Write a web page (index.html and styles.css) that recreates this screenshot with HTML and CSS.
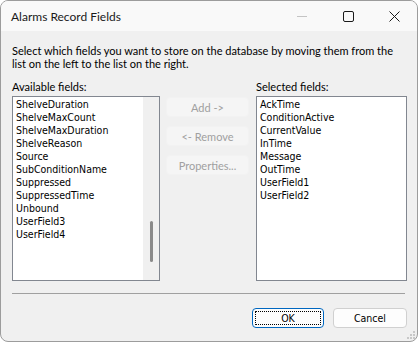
FILE: index.html
```html
<!DOCTYPE html>
<html lang="en">
<head>
    <meta charset="UTF-8">
    <title>Alarms Record Fields</title>
    <link rel="stylesheet" href="styles.css">
</head>
<body>
    <div class="window">
        <div class="titlebar">
            <span class="title">Alarms Record Fields</span>
            <div class="caption-buttons">
                <div class="caption-btn">
                    <svg width="10" height="10" viewBox="0 0 10 10"><path d="M0 5.5h10" stroke="#c4c4c4" stroke-width="1"/></svg>
                </div>
                <div class="caption-btn">
                    <svg width="11" height="11" viewBox="0 0 11 11"><rect x="0.5" y="0.5" width="10" height="10" rx="1.5" fill="none" stroke="#1a1a1a" stroke-width="1"/></svg>
                </div>
                <div class="caption-btn">
                    <svg width="11" height="11" viewBox="0 0 11 11"><path d="M0.5 0.5L10.5 10.5M10.5 0.5L0.5 10.5" stroke="#1a1a1a" stroke-width="1"/></svg>
                </div>
            </div>
        </div>
        <div class="content">
            <p class="intro">Select which fields you want to store on the database by moving them from the list on the left to the list on the right.</p>
            <div class="columns">
                <div class="column left">
                    <label class="field-label">Available fields:</label>
                    <div class="listbox">
                        <div class="items">
                            <div>ShelveDuration</div>
                            <div>ShelveMaxCount</div>
                            <div>ShelveMaxDuration</div>
                            <div>ShelveReason</div>
                            <div>Source</div>
                            <div>SubConditionName</div>
                            <div>Suppressed</div>
                            <div>SuppressedTime</div>
                            <div>Unbound</div>
                            <div>UserField3</div>
                            <div>UserField4</div>
                        </div>
                        <div class="scrollbar"><div class="thumb"></div></div>
                    </div>
                </div>
                <div class="column middle">
                    <button class="btn disabled">Add -&gt;</button>
                    <button class="btn disabled">&lt;- Remove</button>
                    <button class="btn disabled">Properties...</button>
                </div>
                <div class="column right">
                    <label class="field-label">Selected fields:</label>
                    <div class="listbox">
                        <div class="items">
                            <div>AckTime</div>
                            <div>ConditionActive</div>
                            <div>CurrentValue</div>
                            <div>InTime</div>
                            <div>Message</div>
                            <div>OutTime</div>
                            <div>UserField1</div>
                            <div>UserField2</div>
                        </div>
                    </div>
                </div>
            </div>
            <div class="separator"></div>
            <div class="footer">
                <button class="btn ok"><span class="focus">OK</span></button>
                <button class="btn cancel">Cancel</button>
            </div>
        </div>
        <svg class="grip" width="8" height="8" viewBox="0 0 8 8">
            <rect x="6" y="0" width="2" height="2" fill="#c8c8c8"/>
            <rect x="3" y="3" width="2" height="2" fill="#c8c8c8"/>
            <rect x="6" y="3" width="2" height="2" fill="#c8c8c8"/>
            <rect x="0" y="6" width="2" height="2" fill="#c8c8c8"/>
            <rect x="3" y="6" width="2" height="2" fill="#c8c8c8"/>
            <rect x="6" y="6" width="2" height="2" fill="#c8c8c8"/>
        </svg>
    </div>
</body>
</html>
```

FILE: styles.css
```css
body {
    margin: 0;
    background-color: #ffffff;
    font-family: Lato, 'Noto Sans', sans-serif;
}
.window {
    position: relative;
    width: 418px;
    height: 342px;
    box-sizing: border-box;
    border: 1px solid #9c9c9c;
    border-radius: 8px;
    background-color: #f0f0f0;
    overflow: hidden;
}
.titlebar {
    height: 30px;
    display: flex;
    align-items: center;
    background-color: #f9f9f9;
}
.title {
    flex: 1;
    padding-left: 10px;
    font-size: 12px;
    color: #1a1a1a;
}
.caption-buttons {
    display: flex;
    height: 30px;
}
.caption-btn {
    width: 46px;
    height: 30px;
    display: flex;
    align-items: center;
    justify-content: center;
}
.content {
    padding: 13px 10px 0 11px;
}
.intro {
    margin: 0;
    font-size: 11px;
    line-height: 13px;
    color: #000;
}
.columns {
    display: flex;
    margin-top: 10px;
}
.column {
    display: flex;
    flex-direction: column;
}
.left {
    width: 148px;
}
.right {
    width: 151px;
}
.middle {
    width: 83px;
    margin: 0 7px 0 6px;
    padding-top: 17px;
    gap: 9px;
}
.field-label {
    font-size: 11px;
    line-height: 13px;
    height: 13px;
    margin-bottom: 3px;
    color: #000;
}
.listbox {
    height: 185px;
    box-sizing: border-box;
    border: 1px solid #828790;
    background-color: #ffffff;
    display: flex;
}
.items {
    flex: 1;
    padding: 1px 0 0 3px;
    font-family: 'DejaVu Sans Condensed', 'DejaVu Sans', sans-serif;
    font-stretch: condensed;
    font-size: 10.5px;
    line-height: 13px;
    color: #000;
}
.scrollbar {
    width: 16px;
    background-color: #f0f0f0;
    display: flex;
    justify-content: center;
}
.thumb {
    width: 3px;
    height: 41px;
    margin-top: 124px;
    border-radius: 2px;
    background-color: #8a8a8a;
}
.btn {
    height: 20px;
    padding: 0;
    box-sizing: border-box;
    border: 1px solid #d0d0d0;
    border-radius: 4px;
    background-color: #fdfdfd;
    font-family: 'DejaVu Sans Condensed', 'DejaVu Sans', sans-serif;
    font-stretch: condensed;
    font-size: 10.5px;
    color: #000;
}
.btn.disabled {
    border-color: #f2f2f2;
    background-color: #f5f5f5;
    color: #a0a0a0;
    font-family: Lato, 'Noto Sans', sans-serif;
    font-stretch: normal;
    font-size: 11px;
}
.separator {
    margin-top: 12px;
    margin-right: 2px;
    height: 1px;
    background-color: #a0a0a0;
}
.footer {
    display: flex;
    justify-content: flex-end;
    gap: 9px;
    margin-top: 14px;
}
.ok {
    width: 72px;
    border-color: #0067c0;
    padding: 2px;
}
.ok .focus {
    display: flex;
    align-items: center;
    justify-content: center;
    height: 100%;
    box-sizing: border-box;
    border: 1px dotted #000;
    border-radius: 1px;
}
.cancel {
    width: 74px;
}
.grip {
    position: absolute;
    right: 2px;
    bottom: 2px;
}
```
